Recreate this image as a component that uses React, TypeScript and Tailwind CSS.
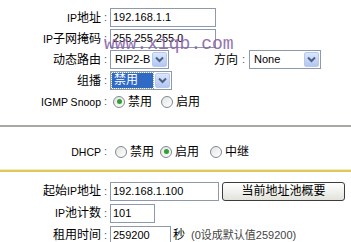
import React from 'react';

const cjk = "font-['Liberation_Sans','Noto_Sans_CJK_SC',sans-serif]";

function Label({ children }: { children: React.ReactNode }) {
  return (
    <div className="flex items-center">
      <div className="w-[101px] text-right text-[12px] text-black leading-none">{children}</div>
      <div className="w-[9px] text-center text-[11px] text-[#555] leading-none">:</div>
    </div>
  );
}

function Ascii({ children }: { children: React.ReactNode }) {
  return <span className="text-[10.5px]">{children}</span>;
}

function TextBox({ value, width }: { value: string; width: string }) {
  return (
    <div className={`${width} h-[19px] border border-[#8c9aab] bg-white flex items-center px-[2px] text-[11px] text-black leading-none`}>
      {value}
    </div>
  );
}

function Arrow() {
  return (
    <div className="w-[15px] h-[15px] rounded-[2px] border border-[#b6c8ec] bg-gradient-to-b from-[#dce6fb] to-[#b3c6f2] flex items-center justify-center">
      <svg width="9" height="7" viewBox="0 0 9 7">
        <path d="M1 1.5 L4.5 5 L8 1.5" fill="none" stroke="#4d6185" strokeWidth="2" />
      </svg>
    </div>
  );
}

function Select({ value, width, active = false }: { value: string; width: string; active?: boolean }) {
  return (
    <div className={`${width} h-[19px] border border-[#8c9aab] bg-white flex items-center justify-between pl-[1px] pr-[1px]`}>
      {active ? (
        <span className="flex-1 h-[15px] mr-[2px] bg-[#316ac5] text-white text-[12px] leading-[15px] pl-[2px] outline-1 outline-dotted outline-[#8aa]">
          {value}
        </span>
      ) : (
        <span className="text-[11px] text-black pl-[3px] leading-none">{value}</span>
      )}
      <Arrow />
    </div>
  );
}

function Radio({ checked, label, gap }: { checked?: boolean; label: string; gap?: string }) {
  return (
    <div className={`flex items-center ${gap ?? ''}`}>
      <span className="w-[12px] h-[12px] rounded-full border border-[#7d8a97] bg-gradient-to-br from-[#e4e4de] to-white flex items-center justify-center">
        {checked && <span className="w-[5px] h-[5px] rounded-full bg-[#2fa12f]" />}
      </span>
      <span className="ml-[3px] text-[12px] text-black leading-none">{label}</span>
    </div>
  );
}

export default function App() {
  return (
    <div className={`relative w-[351px] h-[242px] overflow-hidden bg-white ${cjk}`}>
      <div className="pt-[7px]">
        <div className="h-[21px] flex items-center">
          <Label><Ascii>IP</Ascii>地址</Label>
          <TextBox value="192.168.1.1" width="w-[106px]" />
        </div>
        <div className="h-[21px] flex items-center">
          <Label><Ascii>IP</Ascii>子网掩码</Label>
          <TextBox value="255.255.255.0" width="w-[106px]" />
        </div>
        <div className="h-[21px] flex items-center">
          <Label>动态路由</Label>
          <Select value="RIP2-B" width="w-[59px]" />
          <div className="ml-[45px] text-[12px] text-black leading-none">方向</div>
          <div className="w-[11px] text-center text-[11px] text-[#555] leading-none">:</div>
          <Select value="None" width="w-[72px]" />
        </div>
        <div className="h-[21px] flex items-center">
          <Label>组播</Label>
          <Select value="禁用" width="w-[62px]" active />
        </div>
        <div className="h-[21px] flex items-center">
          <Label><Ascii>IGMP Snoop</Ascii></Label>
          <div className="ml-[3px] flex items-center">
            <Radio checked label="禁用" />
            <Radio label="启用" gap="ml-[9px]" />
          </div>
        </div>
      </div>

      <div className="mt-[13px] h-[2px] bg-[#a9a9a2]" />

      <div className="mt-[14px] h-[21px] flex items-center">
        <Label><Ascii>DHCP</Ascii></Label>
        <div className="ml-[5px] flex items-center">
          <Radio label="禁用" />
          <Radio checked label="启用" gap="ml-[6px]" />
          <Radio label="中继" gap="ml-[11px]" />
        </div>
      </div>

      <div className="mt-[7px] h-[1px] bg-[#f3ecb8]" />
      <div className="h-[2px] bg-[#dccb5c]" />

      <div className="mt-[8px]">
        <div className="h-[22px] flex items-center">
          <Label>起始<Ascii>IP</Ascii>地址</Label>
          <TextBox value="192.168.1.100" width="w-[109px]" />
          <button className="ml-[3px] w-[123px] h-[19px] rounded-[3px] border border-[#3c3c3c] bg-gradient-to-b from-white to-[#e3e3dc] text-[12px] text-black leading-none flex items-center justify-center">
            当前地址池概要
          </button>
        </div>
        <div className="h-[22px] flex items-center">
          <Label><Ascii>IP</Ascii>池计数</Label>
          <TextBox value="101" width="w-[45px]" />
        </div>
        <div className="h-[22px] flex items-center">
          <Label>租用时间</Label>
          <TextBox value="259200" width="w-[61px]" />
          <span className="ml-[2px] text-[12px] text-black leading-none">秒</span>
          <span className="ml-[6px] text-[11px] text-[#444] leading-none">(0设成默认值259200)</span>
        </div>
      </div>

      <div className="absolute left-[104px] top-[35px] font-['Liberation_Mono',monospace] text-[18px] leading-none text-[#8a64a6] opacity-90 pointer-events-none">
        www.xiqb.com
      </div>
    </div>
  );
}
